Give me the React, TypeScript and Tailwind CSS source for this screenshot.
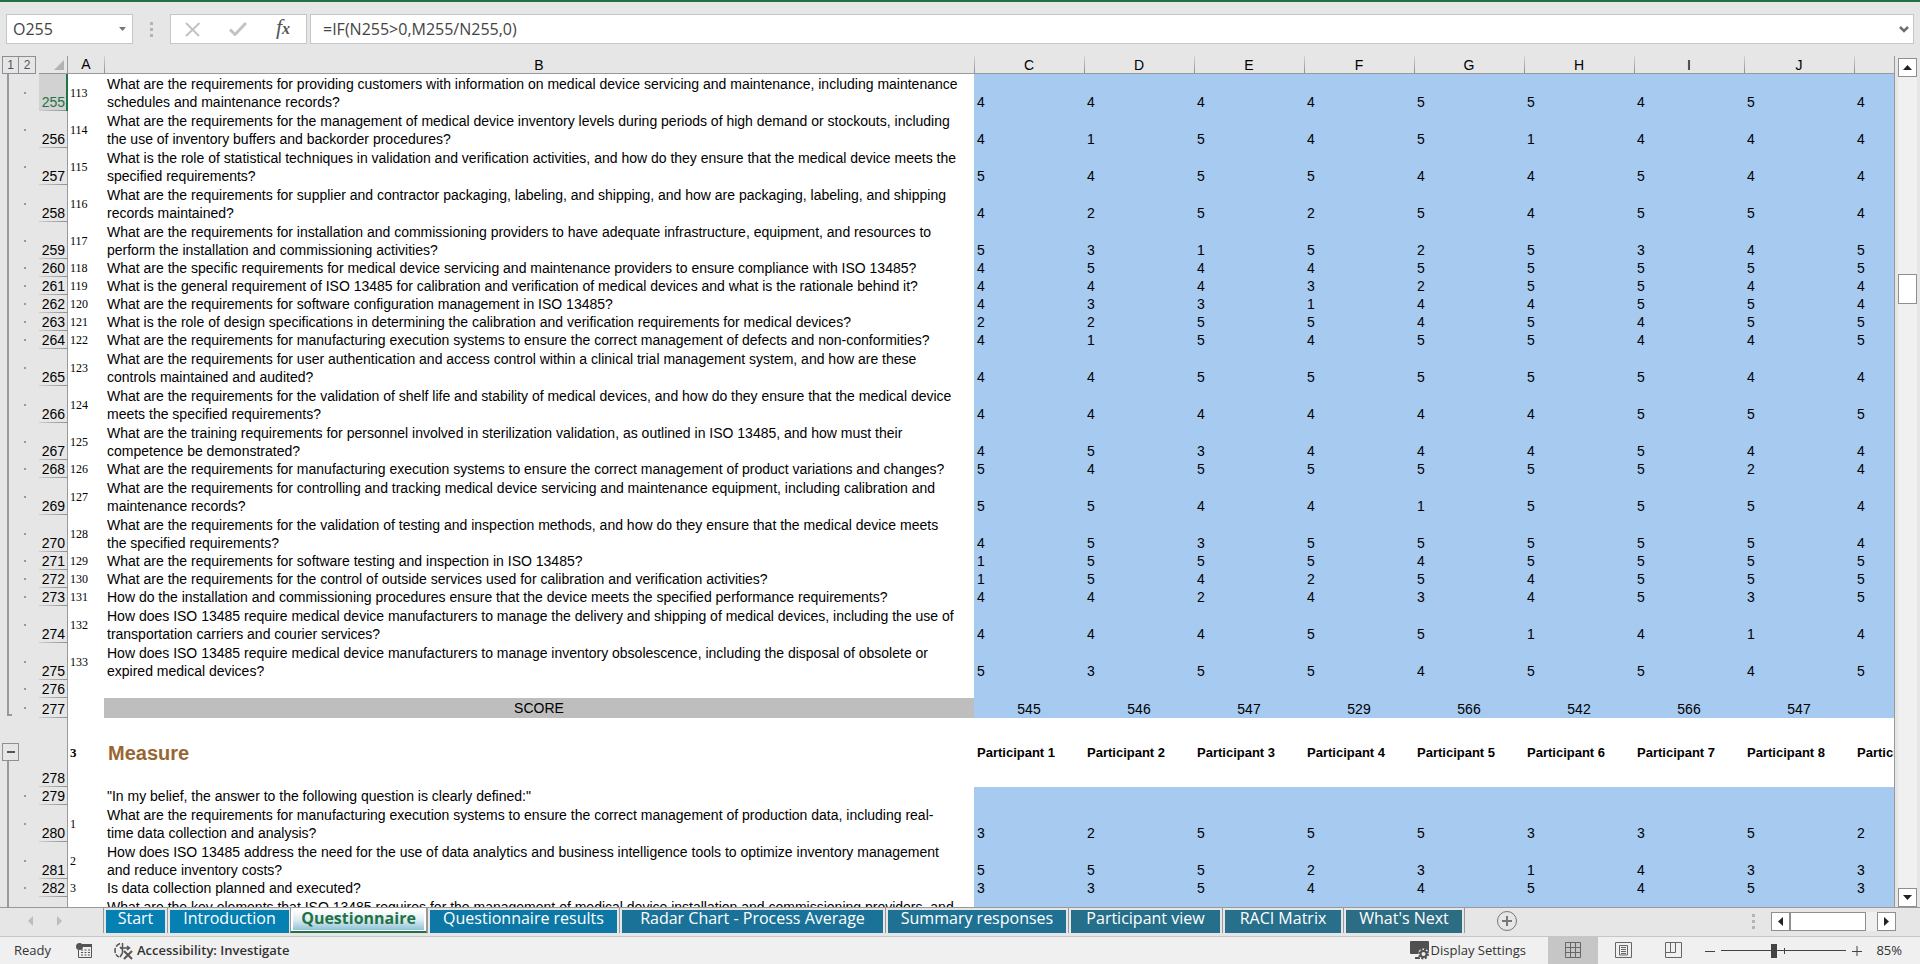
import React, { useState } from "react";

type Row = {
  row: number | null;
  no?: string;
  text?: string;
  scores?: number[];
  kind?: "blank" | "score" | "section" | "intro";
};

const columns = ["C", "D", "E", "F", "G", "H", "I", "J", ""];

const rows: Row[] = [
  {
    row: 255,
    no: "113",
    text: "What are the requirements for providing customers with information on medical device servicing and maintenance, including maintenance\nschedules and maintenance records?",
    scores: [4, 4, 4, 4, 5, 5, 4, 5, 4],
  },
  {
    row: 256,
    no: "114",
    text: "What are the requirements for the management of medical device inventory levels during periods of high demand or stockouts, including\nthe use of inventory buffers and backorder procedures?",
    scores: [4, 1, 5, 4, 5, 1, 4, 4, 4],
  },
  {
    row: 257,
    no: "115",
    text: "What is the role of statistical techniques in validation and verification activities, and how do they ensure that the medical device meets the\nspecified requirements?",
    scores: [5, 4, 5, 5, 4, 4, 5, 4, 4],
  },
  {
    row: 258,
    no: "116",
    text: "What are the requirements for supplier and contractor packaging, labeling, and shipping, and how are packaging, labeling, and shipping\nrecords maintained?",
    scores: [4, 2, 5, 2, 5, 4, 5, 5, 4],
  },
  {
    row: 259,
    no: "117",
    text: "What are the requirements for installation and commissioning providers to have adequate infrastructure, equipment, and resources to\nperform the installation and commissioning activities?",
    scores: [5, 3, 1, 5, 2, 5, 3, 4, 5],
  },
  {
    row: 260,
    no: "118",
    text: "What are the specific requirements for medical device servicing and maintenance providers to ensure compliance with ISO 13485?",
    scores: [4, 5, 4, 4, 5, 5, 5, 5, 5],
  },
  {
    row: 261,
    no: "119",
    text: "What is the general requirement of ISO 13485 for calibration and verification of medical devices and what is the rationale behind it?",
    scores: [4, 4, 4, 3, 2, 5, 5, 4, 4],
  },
  {
    row: 262,
    no: "120",
    text: "What are the requirements for software configuration management in ISO 13485?",
    scores: [4, 3, 3, 1, 4, 4, 5, 5, 4],
  },
  {
    row: 263,
    no: "121",
    text: "What is the role of design specifications in determining the calibration and verification requirements for medical devices?",
    scores: [2, 2, 5, 5, 4, 5, 4, 5, 5],
  },
  {
    row: 264,
    no: "122",
    text: "What are the requirements for manufacturing execution systems to ensure the correct management of defects and non-conformities?",
    scores: [4, 1, 5, 4, 5, 5, 4, 4, 5],
  },
  {
    row: 265,
    no: "123",
    text: "What are the requirements for user authentication and access control within a clinical trial management system, and how are these\ncontrols maintained and audited?",
    scores: [4, 4, 5, 5, 5, 5, 5, 4, 4],
  },
  {
    row: 266,
    no: "124",
    text: "What are the requirements for the validation of shelf life and stability of medical devices, and how do they ensure that the medical device\nmeets the specified requirements?",
    scores: [4, 4, 4, 4, 4, 4, 5, 5, 5],
  },
  {
    row: 267,
    no: "125",
    text: "What are the training requirements for personnel involved in sterilization validation, as outlined in ISO 13485, and how must their\ncompetence be demonstrated?",
    scores: [4, 5, 3, 4, 4, 4, 5, 4, 4],
  },
  {
    row: 268,
    no: "126",
    text: "What are the requirements for manufacturing execution systems to ensure the correct management of product variations and changes?",
    scores: [5, 4, 5, 5, 5, 5, 5, 2, 4],
  },
  {
    row: 269,
    no: "127",
    text: "What are the requirements for controlling and tracking medical device servicing and maintenance equipment, including calibration and\nmaintenance records?",
    scores: [5, 5, 4, 4, 1, 5, 5, 5, 4],
  },
  {
    row: 270,
    no: "128",
    text: "What are the requirements for the validation of testing and inspection methods, and how do they ensure that the medical device meets\nthe specified requirements?",
    scores: [4, 5, 3, 5, 5, 5, 5, 5, 4],
  },
  {
    row: 271,
    no: "129",
    text: "What are the requirements for software testing and inspection in ISO 13485?",
    scores: [1, 5, 5, 5, 4, 5, 5, 5, 5],
  },
  {
    row: 272,
    no: "130",
    text: "What are the requirements for the control of outside services used for calibration and verification activities?",
    scores: [1, 5, 4, 2, 5, 4, 5, 5, 5],
  },
  {
    row: 273,
    no: "131",
    text: "How do the installation and commissioning procedures ensure that the device meets the specified performance requirements?",
    scores: [4, 4, 2, 4, 3, 4, 5, 3, 5],
  },
  {
    row: 274,
    no: "132",
    text: "How does ISO 13485 require medical device manufacturers to manage the delivery and shipping of medical devices, including the use of\ntransportation carriers and courier services?",
    scores: [4, 4, 4, 5, 5, 1, 4, 1, 4],
  },
  {
    row: 275,
    no: "133",
    text: "How does ISO 13485 require medical device manufacturers to manage inventory obsolescence, including the disposal of obsolete or\nexpired medical devices?",
    scores: [5, 3, 5, 5, 4, 5, 5, 4, 5],
  },
  { row: 276, kind: "blank" },
  {
    row: 277,
    kind: "score",
    text: "SCORE",
    scores: [545, 546, 547, 529, 566, 542, 566, 547],
  },
  { row: 278, kind: "section", no: "3", text: "Measure" },
  {
    row: 279,
    kind: "intro",
    text: '"In my belief, the answer to the following question is clearly defined:"',
  },
  {
    row: 280,
    no: "1",
    text: "What are the requirements for manufacturing execution systems to ensure the correct management of production data, including real-\ntime data collection and analysis?",
    scores: [3, 2, 5, 5, 5, 3, 3, 5, 2],
  },
  {
    row: 281,
    no: "2",
    text: "How does ISO 13485 address the need for the use of data analytics and business intelligence tools to optimize inventory management\nand reduce inventory costs?",
    scores: [5, 5, 5, 2, 3, 1, 4, 3, 3],
  },
  {
    row: 282,
    no: "3",
    text: "Is data collection planned and executed?",
    scores: [3, 3, 5, 4, 4, 5, 4, 5, 3],
  },
  {
    row: null,
    text: "What are the key elements that ISO 13485 requires for the management of medical device installation and commissioning providers, and",
  },
];

const tabs = [
  { name: "Start", style: "w-[59px] bg-[#0480b2]" },
  { name: "Introduction", style: "w-[119px] bg-[#0480b2]" },
  { name: "Questionnaire", style: "" },
  { name: "Questionnaire results", style: "w-[187px] bg-[#0d78a5]" },
  { name: "Radar Chart - Process Average", style: "w-[261px] bg-[#1b7298]" },
  { name: "Summary responses", style: "w-[178px] bg-[#1f7194]" },
  { name: "Participant view", style: "w-[149px] bg-[#266f8b]" },
  { name: "RACI Matrix", style: "w-[116px] bg-[#276f8a]" },
  { name: "What's Next", style: "w-[116px] bg-[#2c6d84]" },
];

const rowHeight = (r: Row) => {
  if (r.kind === "section") return "h-[69px]";
  if (r.kind === "score") return "h-5";
  if (r.row === null || r.text?.includes("\n")) return "h-[37px]";
  return "h-[18px]";
};

function Grip() {
  return (
    <div className="flex flex-col gap-[3px]" aria-hidden="true">
      <span className="size-[3px] bg-[#b4b4b4]" />
      <span className="size-[3px] bg-[#b4b4b4]" />
      <span className="size-[3px] bg-[#b4b4b4]" />
    </div>
  );
}

function ScrollButton({ label, points }: { label: string; points: string }) {
  return (
    <button
      type="button"
      aria-label={label}
      className="flex size-[19px] shrink-0 items-center justify-center border border-[#8f8f8f] bg-white"
    >
      <svg width="11" height="11" viewBox="0 0 11 11">
        <polygon points={points} fill="#222" />
      </svg>
    </button>
  );
}

function FormulaBar() {
  return (
    <div className="flex h-[54px] shrink-0 items-center bg-[#e6e6e6] pr-1.5 pl-1.5">
      <div className="flex h-[30px] w-[127px] items-center border border-[#c6c6c6] bg-white pr-1.5">
        <input
          aria-label="Name box"
          defaultValue="O255"
          className="w-full min-w-0 pl-1.5 text-base text-[#444] outline-none"
        />
        <button type="button" aria-label="Name list">
          <svg width="7" height="4" viewBox="0 0 7 4">
            <path d="M0 0h7L3.500 4z" fill="#777" />
          </svg>
        </button>
      </div>
      <div className="flex w-[37px] justify-center">
        <Grip />
      </div>
      <div className="flex h-[30px] w-[137px] items-center justify-between border border-[#c6c6c6] bg-white pr-4 pl-3.5">
        <button type="button" aria-label="Cancel">
          <svg width="16" height="15" viewBox="0 0 16 15">
            <path d="M1 1l13 13M14.500 1L1 14" stroke="#c3c3c3" strokeWidth="2" fill="none" />
          </svg>
        </button>
        <button type="button" aria-label="Enter">
          <svg width="18" height="14" viewBox="0 0 18 14">
            <path d="M1 7.500l5 5L17 1" stroke="#c3c3c3" strokeWidth="3" fill="none" />
          </svg>
        </button>
        <button
          type="button"
          aria-label="Insert function"
          className="font-['Liberation_Serif',serif] text-[22px] leading-5 text-[#555] italic"
        >
          f<span className="text-base font-bold">x</span>
        </button>
      </div>
      <div className="ml-[3px] flex h-[30px] flex-1 items-center border border-[#c6c6c6] bg-white pr-1">
        <input
          aria-label="Formula"
          defaultValue="=IF(N255>0,M255/N255,0)"
          className="min-w-0 flex-1 pl-3 text-base text-[#444] outline-none"
        />
        <button type="button" aria-label="Expand formula bar">
          <svg width="10" height="7" viewBox="0 0 10 7">
            <path d="M1 1l4 4 4-4" stroke="#707070" strokeWidth="2.500" fill="none" />
          </svg>
        </button>
      </div>
    </div>
  );
}

function OutlineCell({ r }: { r: Row }) {
  if (r.kind === "section") {
    return (
      <td className="bg-[#e6e6e6] p-0">
        <div className="flex h-[69px] flex-col">
          <div className="h-[25px]" />
          <button
            type="button"
            aria-label="Collapse group"
            className="ml-0.5 flex h-[18px] w-[17px] shrink-0 items-center justify-center border border-[#8a8f98]"
          >
            <span className="h-0.5 w-2 bg-[#555]" />
          </button>
          <div className="ml-[7px] w-0.5 flex-1 bg-[#999]" />
        </div>
      </td>
    );
  }
  return (
    <td className="bg-[#e6e6e6] p-0">
      <div className={`flex items-center pl-[7px] ${rowHeight(r)}`}>
        {r.kind === "score" ? (
          <div className="mb-0.5 w-[5px] self-stretch border-b-2 border-l-2 border-[#999]" />
        ) : (
          <div className="mr-[3px] w-0.5 self-stretch bg-[#999]" />
        )}
        {r.row && <span className="ml-3 size-0.5 bg-[#999]" />}
      </div>
    </td>
  );
}

function SheetRow({ r, selected }: { r: Row; selected: boolean }) {
  const white = r.kind === "section";
  return (
    <tr className={rowHeight(r)}>
      <OutlineCell r={r} />
      <th
        scope="row"
        className={
          selected
            ? "border-r-2 border-[#217346] bg-[#d2d2d2] p-0 align-bottom font-normal text-[#217346]"
            : "border-r border-[#999] bg-[#e6e6e6] p-0 align-bottom font-normal"
        }
      >
        <div
          className={
            selected
              ? "bg-linear-to-r from-[#cfcfcf] to-[#8f8f8f] bg-[length:100%_1px] bg-bottom bg-no-repeat pr-px text-right leading-[18px]"
              : "bg-linear-to-r from-[#cfcfcf] to-[#8f8f8f] bg-[length:100%_1px] bg-bottom bg-no-repeat pr-0.5 text-right leading-[18px]"
          }
        >
          {r.row}
        </div>
      </th>
      <td
        className={
          white
            ? "p-0 pl-0.5 align-middle font-['Liberation_Serif',serif] text-[13px] leading-4 font-bold"
            : "p-0 pl-0.5 align-middle font-['Liberation_Serif',serif] text-xs leading-4"
        }
      >
        {r.no}
      </td>
      {r.kind === "score" ? (
        <td className="bg-[#bebebe] p-0 text-center align-middle leading-[18px]">{r.text}</td>
      ) : r.kind === "section" ? (
        <td className="p-0 pl-1 align-middle text-xl leading-6 font-bold text-[#996633]">
          {r.text}
        </td>
      ) : (
        <td
          className={
            r.row === null
              ? "p-0 pt-px pl-[3px] align-top leading-[18px] whitespace-pre"
              : "p-0 pl-[3px] align-bottom leading-[18px] whitespace-pre"
          }
        >
          {r.text}
        </td>
      )}
      {columns.map((c, i) =>
        white ? (
          <td
            key={i}
            className="overflow-hidden p-0 pl-[3px] align-middle text-[13px] leading-[18px] font-bold whitespace-nowrap"
          >
            {`Participant ${i + 1}`}
          </td>
        ) : r.kind === "score" ? (
          <td key={i} className="bg-[#a6caf0] p-0 text-center align-bottom leading-[18px]">
            {r.scores?.[i]}
          </td>
        ) : (
          <td key={i} className="bg-[#a6caf0] p-0 pl-[3px] align-bottom leading-[18px]">
            {r.scores?.[i]}
          </td>
        )
      )}
    </tr>
  );
}

function Sheet() {
  return (
    <div className="min-w-0 flex-1 overflow-hidden border-r border-[#999] bg-white">
      <table className="w-full table-fixed border-separate border-spacing-0 font-['Liberation_Sans',Arial,sans-serif] text-sm text-black">
        <colgroup>
          <col className="w-[39px]" />
          <col className="w-[29px]" />
          <col className="w-9" />
          <col className="w-[870px]" />
          {columns.map((c, i) => (
            <col key={i} className={i < 8 ? "w-[110px]" : ""} />
          ))}
        </colgroup>
        <thead>
          <tr className="h-[18px] bg-[#e6e6e6]">
            <td className="p-0">
              <div className="flex h-[18px] pl-0.5 text-xs leading-4 text-[#555]">
                <button type="button" className="w-[17px] border border-[#8a8f98]">
                  1
                </button>
                <button type="button" className="-ml-px w-[18px] border border-[#8a8f98]">
                  2
                </button>
              </div>
            </td>
            <td className="border-r border-b border-[#999] p-0">
              <button type="button" aria-label="Select all" className="flex w-full justify-end pr-[3px]">
                <svg width="10" height="10" viewBox="0 0 10 10">
                  <path d="M10 0v10H0z" fill="#b3b3b3" />
                </svg>
              </button>
            </td>
            <th scope="col" className="border-b border-[#999] p-0 leading-[17px] font-normal">
              A
            </th>
            {["B", ...columns].map((c, i) => (
              <th key={i} scope="col" className="border-b border-[#999] p-0 font-normal">
                <div className="h-[17px] bg-linear-to-b from-[#d4d4d4] to-[#8f8f8f] bg-[length:1px_100%] bg-left bg-no-repeat leading-[18px]">
                  {c}
                </div>
              </th>
            ))}
          </tr>
        </thead>
        <tbody>
          {rows.map((r, i) => (
            <SheetRow key={i} r={r} selected={r.row === 255} />
          ))}
        </tbody>
      </table>
    </div>
  );
}

function SheetTabs() {
  const [active, setActive] = useState("Questionnaire");

  return (
    <div className="flex h-[29px] shrink-0 border-t border-[#999] bg-[#e6e6e6] pr-6">
      <div className="flex w-[103px] items-center gap-6 pb-0.5 pl-7">
        <button type="button" aria-label="Previous sheet">
          <svg width="5" height="10" viewBox="0 0 5 10">
            <path d="M5 0v10L0 5z" fill="#bdbdbd" />
          </svg>
        </button>
        <button type="button" aria-label="Next sheet">
          <svg width="5" height="10" viewBox="0 0 5 10">
            <path d="M0 0v10l5-5z" fill="#bdbdbd" />
          </svg>
        </button>
      </div>
      <nav className="flex items-start">
        {tabs.map((t) =>
          t.name === active ? (
            <button
              key={t.name}
              type="button"
              className="-ml-px h-[25px] w-[137px] border-x border-b-2 border-x-[#999] border-b-[#217346] bg-white p-0.5"
            >
              <span className="block h-5 bg-linear-to-b from-white via-[#dcebf1] to-[#8fc3d8] text-center text-base leading-4 font-bold text-[#217346]">
                {t.name}
              </span>
            </button>
          ) : (
            <div key={t.name} className="flex h-[25px] border-l border-[#999] px-0.5 pt-0.5">
              <button
                type="button"
                onClick={() => setActive(t.name)}
                className={`h-[23px] pb-[7px] text-center text-base leading-4 whitespace-nowrap text-white ${t.style}`}
              >
                {t.name}
              </button>
            </div>
          )
        )}
        <div className="h-[25px] border-l border-[#999]" />
      </nav>
      <button type="button" aria-label="New sheet" className="ml-8 pb-0.5">
        <svg width="20" height="20" viewBox="0 0 20 20" fill="none" stroke="#777">
          <circle cx="10" cy="10" r="9.500" />
          <path d="M10 5v10M5 10h10" strokeWidth="2" />
        </svg>
      </button>
      <div className="ml-auto flex items-center gap-4 pb-0.5">
        <Grip />
        <div className="flex w-[125px] bg-[#f0f0f0]">
          <ScrollButton label="Scroll left" points="8,1 8,10 3,5.500" />
          <div className="h-[19px] w-[76px] border border-[#8f8f8f] bg-white" />
          <div className="flex-1" />
          <ScrollButton label="Scroll right" points="3,1 3,10 8,5.500" />
        </div>
      </div>
    </div>
  );
}

function StatusBar() {
  return (
    <footer className="flex h-7 shrink-0 items-center border-t border-[#c6c6c6] bg-[#f0f0f0] pr-[18px] pl-3.5 text-[13px] text-[#333]">
      <span className="w-[62px]">Ready</span>
      <button type="button" aria-label="Record macro" className="w-[38px]">
        <svg width="16" height="15" viewBox="0 0 16 15">
          <path d="M5 1.500h10.500v13h-13V7" fill="none" stroke="#555" />
          <path d="M6 1h10v3H6z" fill="#555" />
          <circle cx="3.500" cy="3.500" r="3.500" fill="#555" />
          <path d="M5 7h2M8.500 7h2M12 7h2M5 9.500h2M8.500 9.500h2M12 9.500h2M5 12h2M8.500 12h2M12 12h2" stroke="#555" />
        </svg>
      </button>
      <button type="button" className="flex items-center gap-[3px] font-semibold">
        <svg width="20" height="18" viewBox="0 0 20 18" fill="none" stroke="#555">
          <path d="M6 1.500C2.500 3 1 5.500 1 8.500c0 3 1.500 5.500 4 6.500" strokeDasharray="5 1.500" strokeWidth="1.500" />
          <path d="M8.500 1v5M6 5l2.500 2.500V11M6 15l2.500-4M6 6h9M13 4l2.500 2L13 8" strokeWidth="1.500" />
          <path d="M10 9l8 8M18 9l-8 8" strokeWidth="2" />
        </svg>
        Accessibility: Investigate
      </button>
      <div className="ml-auto flex h-full items-center">
        <button type="button" className="flex h-full items-center gap-px pr-[22px]">
          <svg width="20" height="19" viewBox="0 0 20 19">
            <rect y="0" width="19" height="13" rx="1" fill="#505050" />
            <path d="M5 17h5" stroke="#505050" strokeWidth="2" />
            <circle cx="13.500" cy="13" r="5.500" fill="#f0f0f0" />
            <circle cx="13.500" cy="13" r="4.500" fill="none" stroke="#505050" strokeWidth="2" strokeDasharray="2 1.530" />
            <circle cx="13.500" cy="13" r="3" fill="none" stroke="#505050" strokeWidth="2" />
          </svg>
          Display Settings
        </button>
        <button
          type="button"
          aria-label="Normal view"
          className="flex h-full w-[50px] items-center justify-center bg-[#c6c6c6]"
        >
          <svg width="17" height="17" viewBox="0 0 17 17" fill="none" stroke="#666">
            <path d="M.5.5h15v15H.5zM5.500.5v15M10.500.5v15M.5 5.500h15M.5 10.500h15" />
          </svg>
        </button>
        <button type="button" aria-label="Page layout view" className="flex w-[50px] justify-center">
          <svg width="17" height="17" viewBox="0 0 17 17" fill="none" stroke="#666">
            <path d="M.5.5h16v15H.5zM4.500 3.500h8v9.500h-8zM6 5.500h5M6 7.500h5M6 9.500h5M6 11.500h5" />
          </svg>
        </button>
        <button type="button" aria-label="Page break preview" className="flex w-[50px] justify-center">
          <svg width="17" height="17" viewBox="0 0 17 17" fill="none" stroke="#666">
            <path d="M.5.5h16v15H.5zM5.500.5v10M10.500.5v10M.5 10.500h10" />
          </svg>
        </button>
        <button type="button" aria-label="Zoom out" className="ml-[7px]">
          <svg width="10" height="10" viewBox="0 0 10 10">
            <path d="M0 5.500h10" stroke="#444" />
          </svg>
        </button>
        <div className="relative mx-1.5 flex h-full items-center">
          <input
            type="range"
            aria-label="Zoom"
            defaultValue={42}
            className="h-4 w-[125px] appearance-none bg-linear-to-r from-[#444] to-[#444] bg-[length:100%_1px] bg-center bg-no-repeat [&::-webkit-slider-thumb]:h-3.5 [&::-webkit-slider-thumb]:w-1.5 [&::-webkit-slider-thumb]:appearance-none [&::-webkit-slider-thumb]:bg-[#444]"
          />
          <span className="absolute left-1/2 h-1.5 w-px bg-[#444]" />
        </div>
        <button type="button" aria-label="Zoom in">
          <svg width="10" height="10" viewBox="0 0 10 10">
            <path d="M0 5.500h10M5 0v10" stroke="#444" />
          </svg>
        </button>
        <button type="button" className="w-10 text-right">
          85%
        </button>
      </div>
    </footer>
  );
}

export default function App() {
  return (
    <div className="flex h-screen flex-col overflow-hidden border-t-2 border-[#217346] bg-[#e6e6e6] font-['Open_Sans','Segoe_UI',sans-serif]">
      <FormulaBar />
      <main className="flex min-h-0 flex-1">
        <Sheet />
        <div className="flex flex-col pt-0.5 pr-[3px] pl-[3px]">
          <div className="flex flex-1 flex-col bg-[#f0f0f0]">
            <ScrollButton label="Scroll up" points="1,8 10,8 5.500,3" />
            <div className="h-[197px]" />
            <div className="h-[30px] w-[19px] border border-[#8f8f8f] bg-white" />
            <div className="flex-1" />
            <ScrollButton label="Scroll down" points="1,3 10,3 5.500,8" />
          </div>
        </div>
      </main>
      <SheetTabs />
      <StatusBar />
    </div>
  );
}
